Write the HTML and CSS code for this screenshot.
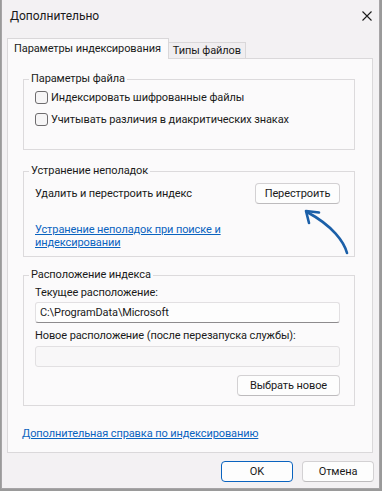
FILE: index.html
```html
<!DOCTYPE html>
<html lang="ru">
<head>
<meta charset="UTF-8">
<title>Дополнительно</title>
<link rel="stylesheet" href="styles.css">
</head>
<body>
<div class="window">
  <div class="titlebar">
    <span class="title">Дополнительно</span>
    <svg class="close" width="10" height="10" viewBox="0 0 10 10"><path d="M0.5 0.5 L9.5 9.5 M9.5 0.5 L0.5 9.5" stroke="#1a1a1a" stroke-width="1.1"/></svg>
  </div>

  <div class="tabs">
    <div class="tab active">Параметры индексирования</div>
    <div class="tab">Типы файлов</div>
  </div>

  <div class="panel">
    <fieldset class="group group-file">
      <legend>Параметры файла</legend>
      <label class="check"><span class="box"></span>Индексировать шифрованные файлы</label>
      <label class="check"><span class="box"></span>Учитывать различия в диакритических знаках</label>
    </fieldset>

    <fieldset class="group group-trouble">
      <legend>Устранение неполадок</legend>
      <div class="rebuild-row">
        <span>Удалить и перестроить индекс</span>
        <button class="btn btn-rebuild">Перестроить</button>
      </div>
      <a class="link trouble-link" href="#">Устранение неполадок при поиске и индексировании</a>
    </fieldset>

    <fieldset class="group group-location">
      <legend>Расположение индекса</legend>
      <div class="field-label first">Текущее расположение:</div>
      <div class="textbox">C:\ProgramData\Microsoft</div>
      <div class="field-label">Новое расположение (после перезапуска службы):</div>
      <div class="textbox disabled"></div>
      <div class="select-row"><button class="btn btn-select">Выбрать новое</button></div>
    </fieldset>

    <a class="link more-link" href="#">Дополнительная справка по индексированию</a>
  </div>

  <div class="footer">
    <button class="btn btn-default">OK</button>
    <button class="btn">Отмена</button>
  </div>

  <!-- hand drawn pointer over the dialog -->
  <svg class="arrow" width="60" height="55" viewBox="295 204 60 55">
    <path d="M346 253 C 343 242, 332 226, 306 212" fill="none" stroke="#1b5fa8" stroke-width="2.6" stroke-linecap="round"/>
    <path d="M318 212.5 L305 211 L308 223" fill="none" stroke="#1b5fa8" stroke-width="2.6" stroke-linecap="round" stroke-linejoin="round"/>
  </svg>
</div>
</body>
</html>
```

FILE: styles.css
```css
body {
  margin: 0;
  background-color: #9a9a9a;
  font-family: Roboto, 'Noto Sans', sans-serif;
  font-size: 11px;
  letter-spacing: -0.1px;
  color: #1a1a1a;
}

.window {
  position: relative;
  box-sizing: border-box;
  width: 379px;
  height: 489px;
  margin-left: 1px;
  background-color: #f3f1f3;
  border: 1px solid #a6a4a6;
  border-top: none;
}

.titlebar {
  display: flex;
  align-items: center;
  justify-content: space-between;
  height: 31px;
  padding: 0 7px 0 8px;
}

.title {
  font-size: 12px;
  letter-spacing: 0;
}

.tabs {
  display: flex;
  align-items: flex-end;
  height: 20px;
  margin-top: 7px;
  padding-left: 5px;
}

.tab {
  box-sizing: border-box;
  border: 1px solid #d9d7d9;
  border-bottom: none;
  background-color: #f0eef0;
}

.tab.active {
  position: relative;
  z-index: 1;
  height: 21px;
  margin-bottom: -1px;
  padding: 0 7px 0 6px;
  line-height: 19px;
  background-color: #fbfafb;
}

.tab:not(.active) {
  height: 16px;
  margin-left: -1px;
  padding: 0 4px 0 4px;
  line-height: 15px;
}

.panel {
  box-sizing: border-box;
  width: 366px;
  height: 395px;
  margin-left: 5px;
  padding: 13px 0 0 15px;
  background-color: #fbfafb;
  border: 1px solid #dad8da;
}

.group {
  box-sizing: border-box;
  width: 332px;
  margin: 0;
  padding: 0 14px 0 11px;
  border: 1px solid #dcdadc;
  min-width: 0;
}

.group legend {
  margin-left: -6px;
  padding: 0 2px;
  line-height: 14px;
}

.group-file {
  padding-bottom: 19px;
}

.group-trouble {
  margin-top: 14px;
  padding-bottom: 7px;
}

.group-location {
  margin-top: 11px;
  padding-bottom: 9px;
}

.check {
  display: flex;
  align-items: center;
  gap: 3px;
  height: 22px;
}

.box {
  box-sizing: border-box;
  width: 13px;
  height: 13px;
  border: 1px solid #6e6c6e;
  border-radius: 3px;
  background-color: #f6f5f6;
}

.rebuild-row {
  display: flex;
  align-items: center;
  justify-content: space-between;
  margin-top: 5px;
}

.btn {
  box-sizing: border-box;
  height: 21px;
  padding: 0;
  font-family: inherit;
  font-size: 11px;
  letter-spacing: -0.1px;
  color: #1a1a1a;
  background-color: #fdfdfd;
  border: 1px solid #d3d1d3;
  border-bottom-color: #bdbbbd;
  border-radius: 4px;
}

.btn-rebuild {
  width: 85px;
}

.btn-select {
  width: 103px;
}

.link {
  color: #0a63bf;
  text-decoration: underline;
}

.trouble-link {
  display: block;
  width: 192px;
  margin-top: 19px;
  line-height: 13px;
}

.field-label {
  margin-top: 5px;
  line-height: 16px;
}

.field-label.first {
  margin-top: 3px;
}

.textbox {
  box-sizing: border-box;
  height: 21px;
  margin-top: 1px;
  padding-left: 4px;
  line-height: 19px;
  background-color: #fdfdfd;
  border: 1px solid #e2e0e2;
  border-bottom-color: #8d8b8d;
  border-radius: 3px;
}

.textbox.disabled {
  margin-top: 2px;
  background-color: #f8f7f8;
  border-bottom-color: #e2e0e2;
}

.select-row {
  display: flex;
  justify-content: flex-end;
  margin-top: 8px;
}

.more-link {
  display: block;
  width: max-content;
  margin: 20px 0 0 -1px;
  line-height: 16px;
}

.footer {
  display: flex;
  justify-content: flex-end;
  gap: 9px;
  margin-top: 8px;
  padding-right: 5px;
}

.footer .btn {
  width: 72px;
}

.btn-default {
  border: 1px solid #0a63bf;
}

.arrow {
  position: absolute;
  left: 294px;
  top: 204px;
}
```
